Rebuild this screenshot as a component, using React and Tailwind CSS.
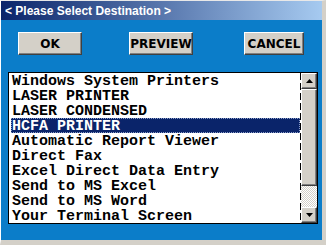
import React from 'react';

const items = [
  'Windows System Printers',
  'LASER PRINTER',
  'LASER CONDENSED',
  'HCFA PRINTER',
  'Automatic Report Viewer',
  'Direct Fax',
  'Excel Direct Data Entry',
  'Send to MS Excel',
  'Send to MS Word',
  'Your Terminal Screen',
];

// classic raised 3D button face
const raised =
  'bg-[#d4d0c8] border-t border-l border-t-white border-l-white border-r border-b border-r-[#404040] border-b-[#404040] shadow-[inset_-1px_-1px_0_#808080]';

function Button({ label, className }) {
  return (
    <button
      className={`${raised} h-[23px] flex items-center justify-center text-black font-bold text-[12px] font-['DejaVu_Sans',sans-serif] ${className}`}
    >
      {label}
    </button>
  );
}

function Arrow({ up }) {
  return (
    <div className={`${raised} w-[16px] h-[16px] flex items-center justify-center`}>
      <svg width="7" height="4" viewBox="0 0 7 4">
        {up ? <polygon points="3.5,0 7,4 0,4" fill="#000" /> : <polygon points="0,0 7,0 3.5,4" fill="#000" />}
      </svg>
    </div>
  );
}

export default function App() {
  return (
    <div className="w-[326px] h-[245px] flex flex-col bg-[#d4d0c8] border-t border-l border-t-[#e8e8e8] border-l-white border-r-[4px] border-b-[5px] border-r-[#d4d0c8] border-b-[#d4d0c8] shadow-[inset_-1px_-1px_0_#404040]">
      {/* title bar */}
      <div className="h-[19px] shrink-0 flex items-center pl-[4px] bg-[linear-gradient(to_right,#0a246a,#a6caf0)]">
        <span className="text-white font-bold text-[12px] font-['Liberation_Sans',Arial,sans-serif]">
          &lt; Please Select Destination &gt;
        </span>
      </div>

      {/* body */}
      <div className="flex-1 bg-[#0b7dc9] flex flex-col">
        <div className="flex pt-[12px] pl-[17px]">
          <Button label="OK" className="w-[64px]" />
          <Button label="PREVIEW" className="w-[64px] ml-[47px]" />
          <Button label="CANCEL" className="w-[60px] ml-[51px]" />
        </div>

        {/* list box */}
        <div className="mt-[17px] ml-[7px] w-[310px] h-[152px] border border-black bg-white flex">
          <div className="flex-1 flex flex-col pl-[2px] font-['Liberation_Mono','Courier_New',monospace] font-bold text-[15px] text-black">
            {items.map((it, i) => (
              <div
                key={it}
                className={`h-[15px] leading-[15px] pl-[1px] whitespace-pre ${
                  i === 3 ? 'bg-[#0a246a] text-white outline outline-1 outline-dotted outline-[#8a9cc8] -outline-offset-1' : ''
                }`}
              >
                <span className="relative top-[1px]">{it}</span>
              </div>
            ))}
          </div>
          <div className="w-px bg-[repeating-linear-gradient(to_bottom,#000_0_7px,transparent_7px_10px)]" />
          <div className="w-[16px] flex flex-col">
            <Arrow up />
            <div className={`${raised} h-[97px]`} />
            <div className="flex-1 bg-[repeating-conic-gradient(#d4d0c8_0_25%,#fff_0_50%)] bg-[length:2px_2px]" />
            <Arrow />
          </div>
        </div>
      </div>
    </div>
  );
}
